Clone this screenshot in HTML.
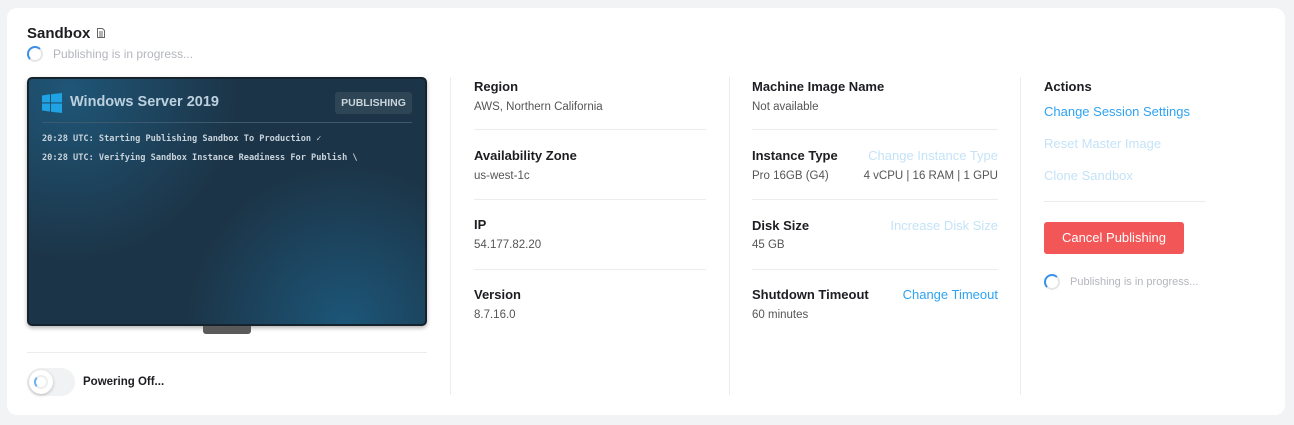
<!DOCTYPE html>
<html><head><style>
*{margin:0;padding:0;box-sizing:border-box}
body{width:1294px;height:425px;background:#f2f3f5;font-family:"Liberation Sans",sans-serif;position:relative;overflow:hidden}
.card{position:absolute;left:7px;top:8px;width:1278px;height:407px;background:#fff;border-radius:10px}
.a{position:absolute;white-space:nowrap}
.lbl{font-size:13px;font-weight:bold;color:#1d1d22}
.val{font-size:11.5px;color:#555}
.link{font-size:13px;color:#2ea3f2}
.dis{font-size:13px;color:#c4e3f8}
.hl{position:absolute;height:1px;background:#ececec}
.vl{position:absolute;width:1px;background:#ececec}
.spin{position:absolute;border-radius:50%;border:2px solid #e6e6e6;border-top-color:#3a8fe8;border-left-color:#3a8fe8}
.mono{font-family:"DejaVu Sans Mono","Liberation Mono",monospace;font-size:8.6px;font-weight:bold;color:#c8d3dc}
</style></head><body>
<div class="card"></div>
<div class="a" style="left:27px;top:25px;font-size:15px;font-weight:bold;color:#1d1d22">Sandbox</div>
<svg class="a" style="left:97px;top:28px" width="8" height="10" viewBox="0 0 8 10"><path d="M.5.5h5l2 2v7h-7z M2 4h4M2 6h4M2 8h4" fill="none" stroke="#666" stroke-width="1"/></svg>
<div class="spin" style="left:27px;top:46px;width:16px;height:16px"></div>
<div class="a" style="left:53px;top:47px;font-size:12px;color:#b3b6bd">Publishing is in progress...</div>

<div class="a" style="left:27px;top:77px;width:400px;height:249px;border-radius:5px;background:radial-gradient(circle at 10% 5%,#1f5677 0%,rgba(31,86,119,0) 40%),radial-gradient(circle at 80% 100%,#1c5678 0%,rgba(28,86,120,0) 40%),#1c3447;border:2px solid #16232d;box-shadow:0 2px 4px rgba(0,0,0,.3)"></div>
<svg class="a" style="left:42px;top:93px" width="20" height="20" viewBox="0 0 20 20"><g fill="#1fa3e4"><path d="M0 2.5l8-1.2V9.4H0zM9 1.2L20 0v9.4H9zM0 10.5h8v8.1l-8-1.2zM9 10.5h11V20L9 18.7z"/></g></svg>
<div class="a" style="left:70px;top:94px;font-size:14.5px;font-weight:bold;color:#bcd0de">Windows Server 2019</div>
<div class="a" style="left:335px;top:92px;width:77px;height:22px;background:#2e4555;border-radius:3px;font-size:10.5px;font-weight:bold;color:#c9d3da;text-align:center;line-height:22px">PUBLISHING</div>
<div class="a" style="left:42px;top:122px;width:370px;height:1px;background:#3c5a6f"></div>
<div class="a mono" style="left:42px;top:134px">20:28 UTC: Starting Publishing Sandbox To Production ✓</div>
<div class="a mono" style="left:42px;top:153px">20:28 UTC: Verifying Sandbox Instance Readiness For Publish \</div>
<div class="a" style="left:203px;top:326px;width:48px;height:8px;background:#5a5a5a;border-radius:0 0 3px 3px"></div>
<div class="hl" style="left:27px;top:352px;width:400px"></div>
<div class="a" style="left:27px;top:368px;width:48px;height:28px;border-radius:14px;background:#f1f2f4"></div>
<div class="a" style="left:29px;top:370px;width:24px;height:24px;border-radius:50%;background:#fff;box-shadow:0 1px 3px rgba(0,0,0,.25)"></div>
<div class="spin" style="left:34px;top:375px;width:14px;height:14px;border-color:#eee;border-left-color:#6fb0f0"></div>
<div class="a" style="left:83px;top:376px;font-size:11.5px;font-weight:bold;color:#1d1d22">Powering Off...</div>

<div class="vl" style="left:450px;top:77px;height:318px"></div>
<div class="vl" style="left:729px;top:77px;height:318px"></div>
<div class="vl" style="left:1020px;top:77px;height:318px"></div>

<div class="a lbl" style="left:474px;top:79px">Region</div>
<div class="a val" style="left:474px;top:101px">AWS, Northern California</div>
<div class="hl" style="left:474px;top:129px;width:232px"></div>
<div class="a lbl" style="left:474px;top:148px">Availability Zone</div>
<div class="a val" style="left:474px;top:170px">us-west-1c</div>
<div class="hl" style="left:474px;top:199px;width:232px"></div>
<div class="a lbl" style="left:474px;top:217px">IP</div>
<div class="a val" style="left:474px;top:239px">54.177.82.20</div>
<div class="hl" style="left:474px;top:269px;width:232px"></div>
<div class="a lbl" style="left:474px;top:287px">Version</div>
<div class="a val" style="left:474px;top:309px">8.7.16.0</div>

<div class="a lbl" style="left:752px;top:79px">Machine Image Name</div>
<div class="a val" style="left:752px;top:101px">Not available</div>
<div class="hl" style="left:752px;top:129px;width:246px"></div>
<div class="a lbl" style="left:752px;top:148px">Instance Type</div>
<div class="a dis" style="right:296px;top:148px">Change Instance Type</div>
<div class="a val" style="left:752px;top:170px">Pro 16GB (G4)</div>
<div class="a val" style="right:296px;top:170px">4 vCPU | 16 RAM | 1 GPU</div>
<div class="hl" style="left:752px;top:199px;width:246px"></div>
<div class="a lbl" style="left:752px;top:218px">Disk Size</div>
<div class="a dis" style="right:296px;top:218px">Increase Disk Size</div>
<div class="a val" style="left:752px;top:239px">45 GB</div>
<div class="hl" style="left:752px;top:269px;width:246px"></div>
<div class="a lbl" style="left:752px;top:287px">Shutdown Timeout</div>
<div class="a link" style="right:296px;top:287px">Change Timeout</div>
<div class="a val" style="left:752px;top:309px">60 minutes</div>

<div class="a lbl" style="left:1044px;top:79px">Actions</div>
<div class="a link" style="left:1044px;top:104px">Change Session Settings</div>
<div class="a dis" style="left:1044px;top:136px">Reset Master Image</div>
<div class="a dis" style="left:1044px;top:168px">Clone Sandbox</div>
<div class="hl" style="left:1044px;top:201px;width:162px"></div>
<div class="a" style="left:1044px;top:222px;width:140px;height:32px;background:#f35656;border-radius:3px;color:#fff;font-size:13px;text-align:center;line-height:32px">Cancel Publishing</div>
<div class="spin" style="left:1044px;top:274px;width:16px;height:16px"></div>
<div class="a" style="left:1070px;top:276px;font-size:11px;color:#b3b6bd">Publishing is in progress...</div>
</body></html>
